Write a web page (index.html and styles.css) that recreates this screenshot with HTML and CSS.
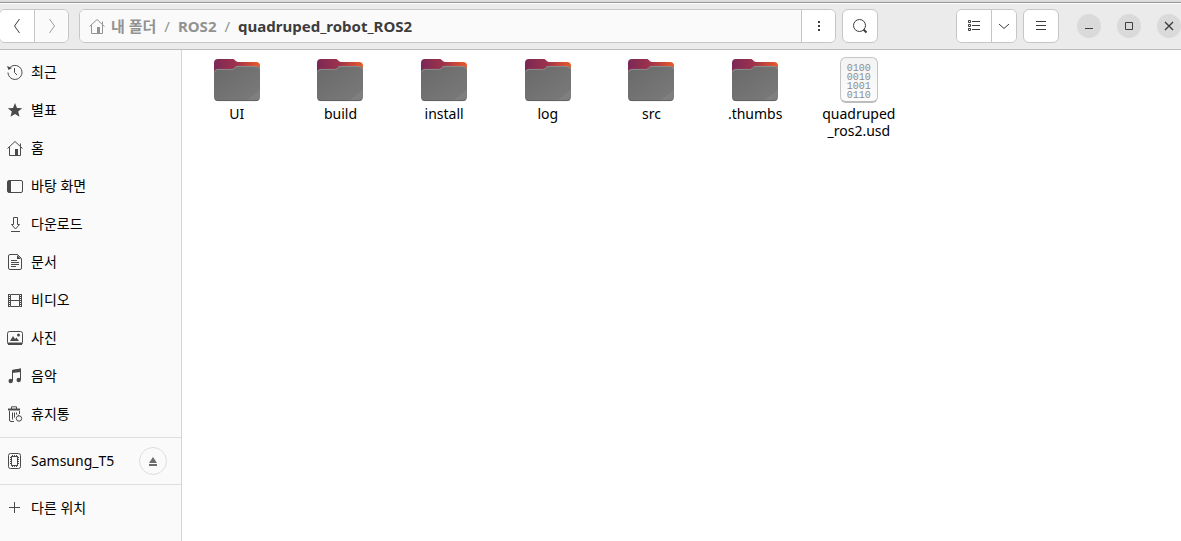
FILE: index.html
```html
<!DOCTYPE html>
<html lang="ko">
<head>
    <meta charset="UTF-8">
    <meta name="viewport" content="width=device-width, initial-scale=1.0">
    <title>quadruped_robot_ROS2</title>
    <link rel="stylesheet" href="styles.css">
</head>
<body>
    <!-- shared shapes -->
    <svg class="defs" width="0" height="0" aria-hidden="true">
        <defs>
            <linearGradient id="folderBack" x1="0" y1="0" x2="1" y2="0">
                <stop offset="0" stop-color="#7a2857"/>
                <stop offset="0.5" stop-color="#a0334a"/>
                <stop offset="1" stop-color="#ee5a26"/>
            </linearGradient>
            <linearGradient id="folderFront" x1="0" y1="0" x2="1" y2="1">
                <stop offset="0" stop-color="#696969"/>
                <stop offset="0.84" stop-color="#787878"/>
                <stop offset="0.85" stop-color="#808080"/>
                <stop offset="1" stop-color="#7c7c7c"/>
            </linearGradient>
            <symbol id="folder" viewBox="0 0 48 48">
                <path fill="url(#folderBack)" d="M1 7a4 4 0 0 1 4-4h14.500c1.500 0 2 .5 2.800 1.600S24 6 25 6h18a4 4 0 0 1 4 4v20H1z"/>
                <path fill="url(#folderFront)" d="M1 17a4 4 0 0 1 4-4h13.500c1.500 0 2.200-.4 3.200-1.500S23.500 10 25 10h18a4 4 0 0 1 4 4v27a4 4 0 0 1-4 4H5a4 4 0 0 1-4-4z"/>
                <path fill="none" stroke="#969696" stroke-width="0.8" d="M1.300 16.500A3.700 3.700 0 0 1 5 13.400h13.500c1.500 0 2.200-.4 3.200-1.500s1.800-1.500 3.300-1.500h18a3.700 3.700 0 0 1 3.700 3"/>
                <path fill="none" stroke="#5c5c5c" stroke-width="0.8" d="M2 43.400a4 4 0 0 0 3 1.200h38a4 4 0 0 0 3-1.200"/>
            </symbol>
            <symbol id="home" viewBox="0 0 16 16">
                <path fill="none" stroke="currentColor" d="M.5 8.500l7.500-7 7.500 7M2.500 7v8.500h11V7M13.500 6V3.500"/>
                <path fill="currentColor" d="M8 9h3v6H8z"/>
            </symbol>
        </defs>
    </svg>

    <header class="headerbar">
        <div class="group nav">
            <button type="button" aria-label="뒤로"><svg class="icon" viewBox="0 0 16 16"><path d="M10.500 1l-5 7 5 7"/></svg></button>
            <button type="button" class="off" aria-label="앞으로" disabled><svg class="icon" viewBox="0 0 16 16"><path d="M5.500 1l5 7-5 7"/></svg></button>
        </div>

        <div class="group pathbar">
            <nav class="crumbs">
                <a href="#"><svg class="icon"><use href="#home"/></svg>내 폴더</a>
                <span class="slash">/</span>
                <a href="#">ROS2</a>
                <span class="slash">/</span>
                <a href="#" class="current">quadruped_robot_ROS2</a>
            </nav>
            <button type="button" aria-label="폴더 메뉴"><svg class="icon" viewBox="0 0 16 16"><path class="solid" d="M7 3h2v2H7zM7 7h2v2H7zM7 11h2v2H7z"/></svg></button>
        </div>

        <button type="button" class="single" aria-label="검색"><svg class="icon" viewBox="0 0 16 16"><circle cx="7.500" cy="7.500" r="6"/><path stroke-width="2" d="M11.500 11.500l3 3"/></svg></button>

        <div class="group view">
            <button type="button" aria-label="목록 보기"><svg class="icon" viewBox="0 0 16 16"><path d="M2.500 2.500h2v2h-2zM2.500 6.500h2v2h-2zM2.500 10.500h2v2h-2zM6 3.500h8M6 7.500h8M6 11.500h8"/></svg></button>
            <button type="button" class="narrow" aria-label="보기 옵션"><svg class="icon" viewBox="0 0 16 16"><path d="M3 6l5 4.500L13 6"/></svg></button>
        </div>

        <button type="button" class="single" aria-label="메뉴"><svg class="icon" viewBox="0 0 16 16"><path d="M3 3.500h10M3 7.500h10M3 11.500h10"/></svg></button>

        <div class="window-buttons">
            <button type="button" aria-label="최소화"><svg class="icon" viewBox="0 0 16 16"><path d="M4 10.500h8"/></svg></button>
            <button type="button" aria-label="최대화"><svg class="icon" viewBox="0 0 16 16"><path d="M4.500 4.500h7v7h-7z"/></svg></button>
            <button type="button" aria-label="닫기"><svg class="icon" viewBox="0 0 16 16"><path stroke-width="1.400" d="M4 4l8 8M12 4l-8 8"/></svg></button>
        </div>
    </header>

    <div class="content">
        <aside class="sidebar">
            <ul class="places">
                <li><a href="#"><svg class="icon" viewBox="0 0 16 16"><path d="M2.200 4.500A7 7 0 1 1 1 8.500M7.500 4v4.500l2.500 2.500"/><path class="solid" d="M0 2l1.500 4L5 4z"/></svg>최근</a></li>
                <li><a href="#"><svg class="icon" viewBox="0 0 16 16"><path class="solid" d="M8 1l2 4.900 5.200.4-4 3.300 1.300 5.200L8 12l-4.500 2.800 1.300-5.200-4-3.300 5.200-.4z"/></svg>별표</a></li>
                <li><a href="#"><svg class="icon"><use href="#home"/></svg>홈</a></li>
                <li><a href="#"><svg class="icon" viewBox="0 0 16 16"><rect x="0.500" y="2.500" width="15" height="12" rx="1.500"/><path class="solid" d="M1 3h3v11H1z"/></svg>바탕 화면</a></li>
                <li><a href="#"><svg class="icon" viewBox="0 0 16 16"><path d="M6.500 1.500h4v7h2L8.500 13l-4-4.500h2zM4 15.500h9"/></svg>다운로드</a></li>
                <li><a href="#"><svg class="icon" viewBox="0 0 16 16"><path d="M3 .5h7.500l4 4V14a1.500 1.500 0 0 1-1.500 1.500H3A1.500 1.500 0 0 1 1.500 14V2A1.500 1.500 0 0 1 3 .5zM4 6.500h6M4 8.500h8M4 10.500h8M4 12.500h5"/><path class="solid" d="M10 1v4h4z"/></svg>문서</a></li>
                <li><a href="#"><svg class="icon" viewBox="0 0 16 16"><path d="M3.500 2.500h9v12h-9zM4 8.500h8M1.500 2v13M14.500 2v13"/><path stroke-dasharray="1 1" d="M2.500 2v13M13.500 2v13"/></svg>비디오</a></li>
                <li><a href="#"><svg class="icon" viewBox="0 0 16 16"><rect x="0.500" y="1.500" width="15" height="13" rx="2"/><path class="solid" d="M1 12.500h14V15H1zM3 11l3-5 2 3 1.500-1.500L12 11z"/><circle class="solid" cx="11.500" cy="5" r="1.500"/></svg>사진</a></li>
                <li><a href="#"><svg class="icon" viewBox="0 0 16 16"><path d="M5.500 13V2.500l8-1.500v11"/><path class="solid" d="M5 2l9-1.500V4L5 5z"/><circle class="solid" cx="3.700" cy="13" r="2.200"/><circle class="solid" cx="11.700" cy="12" r="2.200"/></svg>음악</a></li>
                <li><a href="#"><svg class="icon" viewBox="0 0 16 16"><path d="M4.500 3V.8h5V3M2.500 5v9a1.500 1.500 0 0 0 1.500 1.500h3M5.500 6.500v7M7.500 6.500v5M9.500 6.500v2M12.500 5v3"/><path class="solid" d="M1 2.500h12v2H1z"/><circle cx="12" cy="12.500" r="2.700"/><path d="M11 8.500l1 1.500"/></svg>휴지통</a></li>
            </ul>
            <ul class="places">
                <li>
                    <a href="#"><svg class="icon" viewBox="0 0 16 16"><rect x="1.500" y="0.500" width="12" height="15" rx="2"/><rect x="4.500" y="3.500" width="6" height="9"/><path stroke-dasharray="1 1" d="M3.500 4v8M11.500 4v8M5 2.500h5M5 13.500h5"/></svg>Samsung_T5</a>
                    <button type="button" class="eject" aria-label="꺼내기"><svg class="icon" viewBox="0 0 16 16"><path class="solid" d="M8 4l4 6H4zM4 11h8v2H4z"/></svg></button>
                </li>
            </ul>
            <ul class="places">
                <li><a href="#"><svg class="icon" viewBox="0 0 16 16"><path d="M2 7.500h11M7.500 2v11"/></svg>다른 위치</a></li>
            </ul>
        </aside>

        <main class="files">
            <a href="#" class="file"><svg class="thumb"><use href="#folder"/></svg><span>UI</span></a>
            <a href="#" class="file"><svg class="thumb"><use href="#folder"/></svg><span>build</span></a>
            <a href="#" class="file"><svg class="thumb"><use href="#folder"/></svg><span>install</span></a>
            <a href="#" class="file"><svg class="thumb"><use href="#folder"/></svg><span>log</span></a>
            <a href="#" class="file"><svg class="thumb"><use href="#folder"/></svg><span>src</span></a>
            <a href="#" class="file"><svg class="thumb"><use href="#folder"/></svg><span>.thumbs</span></a>
            <a href="#" class="file">
                <span class="binary">0100<br>0010<br>1001<br>0110</span>
                <span>quadruped<wbr>_ros2.usd</span>
            </a>
        </main>
    </div>
</body>
</html>
```

FILE: styles.css
```css
* {
    box-sizing: border-box;
}
body {
    margin: 0;
    min-height: 100vh;
    display: flex;
    flex-direction: column;
    background: #fff;
    color: #000;
    font-family: "Noto Sans", "Noto Sans CJK KR", sans-serif;
    font-size: 14px;
}
a {
    color: inherit;
    text-decoration: none;
}
button {
    display: flex;
    align-items: center;
    justify-content: center;
    padding: 0;
    border: none;
    background: #fff;
    color: #3d3d3d;
    font: inherit;
}
.defs {
    position: absolute;
}
.icon {
    flex: none;
    width: 16px;
    height: 16px;
    fill: none;
    stroke: currentColor;
}
.icon .solid {
    fill: currentColor;
    stroke: none;
}

/* the home symbol brings its own strokes */
.icon use {
    stroke: none;
}

/* header */
.headerbar {
    display: flex;
    align-items: center;
    height: 50px;
    padding-top: 3px;
    background: linear-gradient(#dcdcdc 2px, #979797 2px, #979797 3px, #fff 3px, #fff 4px, #ebebeb 4px);
    border-bottom: 1px solid #bdbdbd;
}
.group,
.single {
    display: flex;
    height: 34px;
    border: 1px solid #c6c6c6;
    border-radius: 6px;
    background: #fff;
    overflow: hidden;
}
.group button {
    width: 34px;
}
.group button + button,
.crumbs + button {
    border-left: 1px solid #c6c6c6;
}
.group .narrow {
    width: 25px;
}
.nav {
    margin-left: -1px;
    margin-right: 10px;
}
.nav .off {
    background: #fafafa;
    color: #9c9c9c;
}
.pathbar {
    flex: 1;
    margin-right: 6px;
}
.crumbs {
    flex: 1;
    display: flex;
    align-items: center;
    gap: 8px;
    padding-left: 9px;
    background: #fafafa;
    color: #929292;
    font-size: 15px;
    font-weight: bold;
    line-height: 18px;
    white-space: nowrap;
}
.crumbs a {
    display: flex;
    align-items: center;
    gap: 6px;
}
.crumbs .current {
    color: #3d3d3d;
}
.slash {
    font-weight: normal;
}
.single {
    width: 36px;
    align-items: center;
}
.view {
    margin-left: 78px;
    margin-right: 6px;
}
.window-buttons {
    display: flex;
    gap: 16px;
    padding-left: 18px;
}
.window-buttons button {
    width: 24px;
    height: 24px;
    border-radius: 50%;
    background: #dadada;
}

/* sidebar */
.content {
    flex: 1;
    display: flex;
}
.sidebar {
    flex: none;
    width: 182px;
    background: #fafafa;
    border-right: 1px solid #d5d5d5;
}
.places {
    list-style: none;
    margin: 0;
    padding: 4px 0;
}
.places:first-child {
    padding-top: 3px;
}
.places + .places {
    border-top: 1px solid #dedede;
}
.places li {
    display: flex;
    align-items: center;
    height: 38px;
    padding: 0 14px 0 7px;
}
.places a {
    flex: 1;
    display: flex;
    align-items: center;
    gap: 8px;
    line-height: 18px;
    white-space: nowrap;
}
.places .icon {
    color: #4a4a4a;
}
.eject {
    width: 28px;
    height: 28px;
    border: 1px solid #dedede;
    border-radius: 50%;
    background: #fafafa;
}
.places .eject .icon {
    color: #6c6c6c;
}

/* file grid */
.files {
    flex: 1;
    display: grid;
    grid-template-columns: repeat(9, 1fr);
    align-content: start;
    padding: 6px 63px 0 3px;
}
.file {
    display: flex;
    flex-direction: column;
    align-items: center;
    line-height: 17px;
    text-align: center;
}
.file > span:last-child {
    max-width: 88px;
    margin-top: 1px;
}
.thumb {
    width: 48px;
    height: 48px;
}
.binary {
    width: 38px;
    height: 46px;
    margin: 1px 0;
    padding-top: 6px;
    border: 1px solid #c4c4c4;
    border-bottom: 2px solid #bcbcbc;
    border-radius: 6px;
    background: linear-gradient(#f3f3f3, #fcfcfc);
    color: #8c8c8c;
    font-family: "Liberation Mono", monospace;
    font-size: 10px;
    line-height: 9px;
}
```
